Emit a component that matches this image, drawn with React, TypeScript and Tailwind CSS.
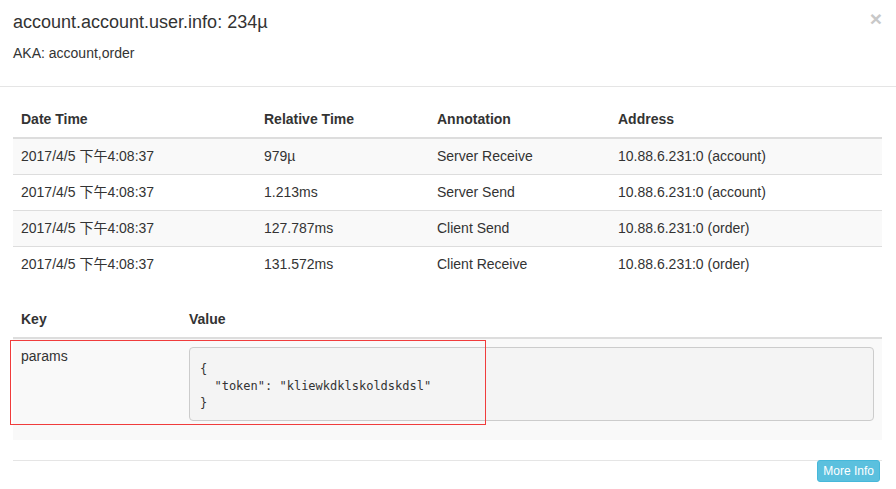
import React from 'react';

const rows = [
  { date: '2017/4/5 下午4:08:37', rel: '979µ', ann: 'Server Receive', addr: '10.88.6.231:0 (account)' },
  { date: '2017/4/5 下午4:08:37', rel: '1.213ms', ann: 'Server Send', addr: '10.88.6.231:0 (account)' },
  { date: '2017/4/5 下午4:08:37', rel: '127.787ms', ann: 'Client Send', addr: '10.88.6.231:0 (order)' },
  { date: '2017/4/5 下午4:08:37', rel: '131.572ms', ann: 'Client Receive', addr: '10.88.6.231:0 (order)' },
];

const cols = 'grid grid-cols-[243px_173px_181px_272px]';

export default function App() {
  return (
    <div
      className="relative w-[896px] h-[489px] overflow-hidden bg-white text-[14px] text-[#333]"
      style={{ fontFamily: '"Liberation Sans", Arial, "Noto Sans CJK SC", sans-serif' }}
    >
      {/* header */}
      <div className="relative border-b border-[#e5e5e5] px-[13px] pt-[12px] pb-[23px]">
        <h4 className="text-[18px] leading-[20px]">account.account.user.info: 234µ</h4>
        <p className="mt-[11px] leading-[20px]">AKA: account,order</p>
        <button className="absolute right-[14px] top-[8px] text-[21px] font-bold leading-[21px] text-[#c8c8c8]">×</button>
      </div>

      {/* body */}
      <div className="px-[13px] pt-[14px]">
        <div className="w-[869px]">
          <div className={`${cols} h-[38px] items-center border-b-2 border-[#ddd] font-bold`}>
            <div className="px-[8px]">Date Time</div>
            <div className="px-[8px]">Relative Time</div>
            <div className="px-[8px]">Annotation</div>
            <div className="px-[8px]">Address</div>
          </div>
          {rows.map((r, i) => (
            <div
              key={i}
              className={`${cols} items-center ${i > 0 ? 'h-[36px] border-t border-[#ddd]' : 'h-[35px]'} ${i % 2 === 0 ? 'bg-[#f9f9f9]' : ''}`}
            >
              <div className="px-[8px]">{r.date}</div>
              <div className="px-[8px]">{r.rel}</div>
              <div className="px-[8px]">{r.ann}</div>
              <div className="px-[8px]">{r.addr}</div>
            </div>
          ))}
        </div>

        <div className="mt-[19px] w-[869px]">
          <div className="grid grid-cols-[168px_1fr] h-[38px] items-center border-b-2 border-[#ddd] font-bold">
            <div className="px-[8px]">Key</div>
            <div className="px-[8px]">Value</div>
          </div>
          <div className="grid grid-cols-[168px_1fr] bg-[#f9f9f9] pb-[19px]">
            <div className="px-[8px] pt-[7px] leading-[20px]">params</div>
            <div className="px-[8px] pt-[8px]">
              <pre
                className="h-[74px] rounded-[4px] border border-[#ccc] bg-[#f4f4f4] px-[10px] pt-[13px] text-[12px] leading-[17px] text-[#333]"
                style={{ fontFamily: '"DejaVu Sans Mono", Consolas, monospace' }}
              >
{`{
  "token": "kliewkdklskoldskdsl"
}`}
              </pre>
            </div>
          </div>
        </div>

        {/* footer */}
        <div className="mt-[20px] flex w-[869px] justify-end border-t border-[#e5e5e5]">
          <button className="-mt-px mr-[2px] h-[22px] rounded-[3px] border border-[#46b8da] bg-[#5bc0de] px-[5px] text-[12px] leading-[18px] text-white">
            More Info
          </button>
        </div>
      </div>

      {/* highlight box */}
      <div className="absolute left-[10px] top-[340px] h-[85px] w-[476px] border border-[#f03c3c]" />
    </div>
  );
}
